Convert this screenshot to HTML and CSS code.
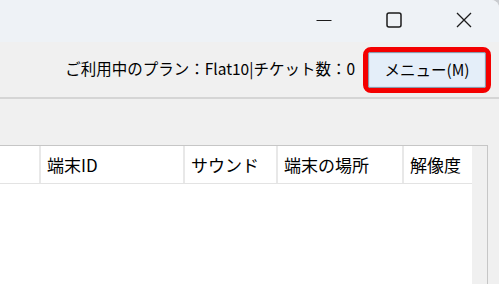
FILE: index.html
```html
<!DOCTYPE html>
<html>

<head>
  <meta charset="utf-8">
  <title>端末一覧</title>
  <link rel="stylesheet" href="styles.css">
</head>

<body>

  <div class="window">

    <div class="titlebar">
      <div class="caption-btn">
        <svg width="16" height="16" viewBox="0 0 16 16">
          <line x1="0.5" y1="8.5" x2="15.5" y2="8.5" stroke="#1b1b1b" stroke-width="1.2" />
        </svg>
      </div>
      <div class="caption-btn">
        <svg width="16" height="16" viewBox="0 0 16 16">
          <rect x="1" y="1" width="14" height="14" rx="2" fill="none" stroke="#1b1b1b" stroke-width="1.5" />
        </svg>
      </div>
      <div class="caption-btn">
        <svg width="16" height="16" viewBox="0 0 16 16">
          <path d="M1 1 L15 15 M15 1 L1 15" stroke="#1b1b1b" stroke-width="1.3" fill="none" />
        </svg>
      </div>
    </div>

    <div class="toolbar">
      <span class="plan">ご利用中のプラン：Flat10|チケット数：0</span>
      <div class="highlight">
        <button class="menu-btn">メニュー(M)</button>
      </div>
    </div>

    <div class="gap-area"></div>

    <div class="list-wrap">
      <div class="list">
        <div class="list-header">
          <div class="col col-first"></div>
          <div class="col col-id">端末ID</div>
          <div class="col col-sound">サウンド</div>
          <div class="col col-place">端末の場所</div>
          <div class="col col-res">解像度</div>
        </div>
        <div class="list-body"></div>
      </div>
      <div class="scroll-strip"></div>
    </div>

  </div>

</body>

</html>
```

FILE: styles.css
```css
html,
body {
  margin: 0;
  padding: 0;
  background: #c9ccd0;
}

body {
  width: 499px;
  height: 284px;
  overflow: hidden;
  font-family: "Noto Sans CJK JP", "Noto Sans", sans-serif;
  color: #000;
}

.window {
  display: flex;
  flex-direction: column;
  height: 284px;
  background: #f0f0f0;
  border-top-right-radius: 8px;
  overflow: hidden;
}

/* Title bar with caption buttons */
.titlebar {
  height: 42px;
  background: #eef2f6;
  display: flex;
  justify-content: flex-end;
}

.caption-btn {
  width: 70px;
  height: 42px;
  display: flex;
  align-items: center;
  justify-content: center;
}

.caption-btn svg {
  display: block;
  margin-top: -3px;
}

.toolbar {
  height: 55px;
  display: flex;
  align-items: center;
  justify-content: flex-end;
  gap: 8px;
  padding-right: 8px;
  border-bottom: 2px solid #d5d5d5;
}

.plan {
  font-size: 15.5px;
  line-height: 20px;
  letter-spacing: 0;
  margin-top: -3px;
}

/* Red marker round the menu button */
.highlight {
  border: 5px solid #f40000;
  border-radius: 8px;
  margin-top: 1px;
}

.menu-btn {
  display: block;
  width: 118px;
  height: 36px;
  border: 1px solid #8d9aab;
  border-radius: 2px;
  background: #e4eef9;
  box-shadow: inset 0 0 0 1px #d7e4f3;
  font-family: "Noto Sans CJK JP", "Noto Sans", sans-serif;
  font-size: 15.5px;
  color: #000;
  padding: 0 0 2px;
}

.gap-area {
  height: 46px;
}

.list-wrap {
  flex: 1;
  display: flex;
  width: 487px;
  border-top: 1px solid #c6c6c6;
  border-right: 1px solid #c6c6c6;
}

.list {
  width: 472px;
  display: flex;
  flex-direction: column;
  background: #fff;
}

.list-header {
  height: 37px;
  display: flex;
  border-bottom: 1px solid #e3e3e3;
}

.col {
  font-size: 17px;
  line-height: 37px;
  padding-left: 6px;
  border-right: 2px solid #e8e8e8;
  box-sizing: border-box;
}

.col-first {
  width: 41px;
}

.col-id {
  width: 144px;
}

.col-sound {
  width: 93px;
}

.col-place {
  width: 126px;
}

.col-res {
  flex: 1;
  border-right: none;
}

.list-body {
  flex: 1;
}

.scroll-strip {
  flex: 1;
  background: #f0f0f0;
}
```
